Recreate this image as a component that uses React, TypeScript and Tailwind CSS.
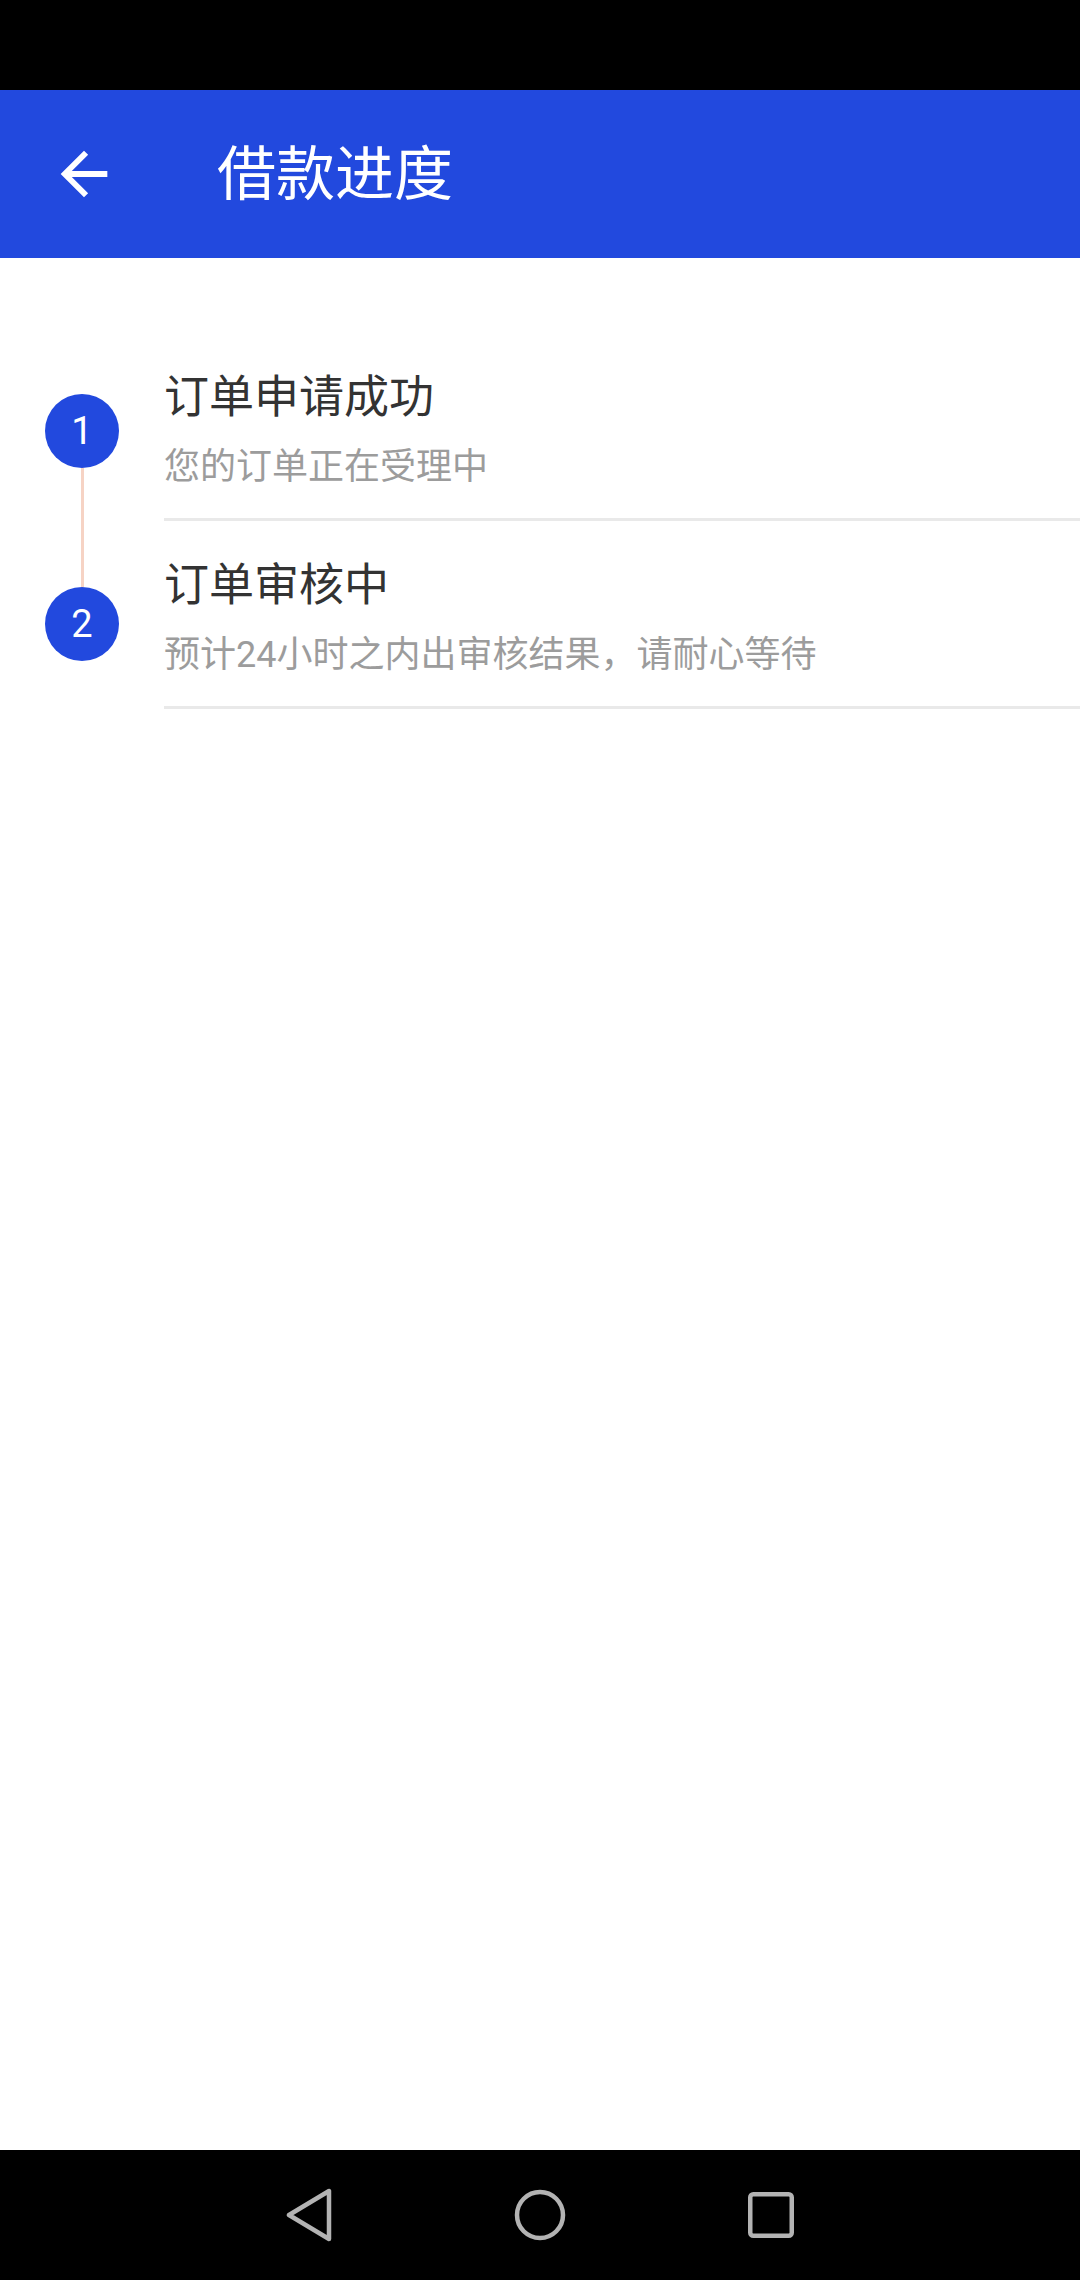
import React from 'react';

interface Step {
  no: number;
  title: string;
  desc: string;
}

const steps: Step[] = [
  { no: 1, title: '订单申请成功', desc: '您的订单正在受理中' },
  { no: 2, title: '订单审核中', desc: '预计24小时之内出审核结果，请耐心等待' },
];

const font = "font-['Roboto','Noto_Sans_CJK_SC',sans-serif]";

const StepRow: React.FC<{ step: Step; first: boolean; last: boolean }> = ({ step, first, last }) => (
  <div className="flex h-[188px]">
    {/* timeline column */}
    <div className="flex w-[164px] flex-col items-center">
      <div className={`w-[3px] ${first ? 'h-[61px] bg-transparent' : 'h-[66px] bg-[#f6d3c4]'}`} />
      <div className="flex h-[74px] w-[74px] items-center justify-center rounded-full bg-[#2249de] text-[38px] leading-none text-white">
        {step.no}
      </div>
      <div className={`w-[3px] flex-1 ${last ? 'bg-transparent' : 'bg-[#f6d3c4]'}`} />
    </div>
    <div className="flex flex-1 flex-col border-b-[3px] border-[#e9e9e9] pt-[42px]">
      <div className="text-[45px] leading-none text-[#333333]">{step.title}</div>
      <div className="mt-[29px] text-[36px] leading-none text-[#9c9c9c]">{step.desc}</div>
    </div>
  </div>
);

export default function App() {
  return (
    <div className={`flex h-[2280px] w-[1080px] flex-col bg-white ${font}`}>
      {/* status bar */}
      <div className="h-[90px] bg-black" />

      {/* header */}
      <div className="flex h-[168px] items-center bg-[#2249de] pl-[49px]">
        <svg width="70" height="70" viewBox="0 0 24 24" fill="white">
          <path d="M20 11H7.83l5.59-5.59L12 4l-8 8 8 8 1.41-1.41L7.83 13H20v-2z" />
        </svg>
        <h1 className="ml-[98px] text-[59px] font-normal leading-none text-white">借款进度</h1>
      </div>

      {/* steps */}
      <div className="flex-1 pt-[75px]">
        {steps.map((s, i) => (
          <StepRow key={s.no} step={s} first={i === 0} last={i === steps.length - 1} />
        ))}
      </div>

      {/* nav bar */}
      <div className="flex h-[130px] items-center justify-center gap-[171px] bg-black">
        <div className="flex w-[60px] justify-center">
          <svg width="48" height="54" viewBox="0 0 48 54" fill="none" stroke="#b3b3b3" strokeWidth="4.5" strokeLinejoin="round">
            <path d="M4 27 L44 3 L44 51 Z" />
          </svg>
        </div>
        <div className="flex w-[60px] justify-center">
          <svg width="52" height="52" viewBox="0 0 52 52" fill="none" stroke="#b3b3b3" strokeWidth="4.5">
            <circle cx="26" cy="26" r="23" />
          </svg>
        </div>
        <div className="flex w-[60px] justify-center">
          <svg width="46" height="46" viewBox="0 0 46 46" fill="none" stroke="#b3b3b3" strokeWidth="4.5">
            <rect x="2.25" y="2.25" width="41.5" height="41.5" rx="3" />
          </svg>
        </div>
      </div>
    </div>
  );
}
